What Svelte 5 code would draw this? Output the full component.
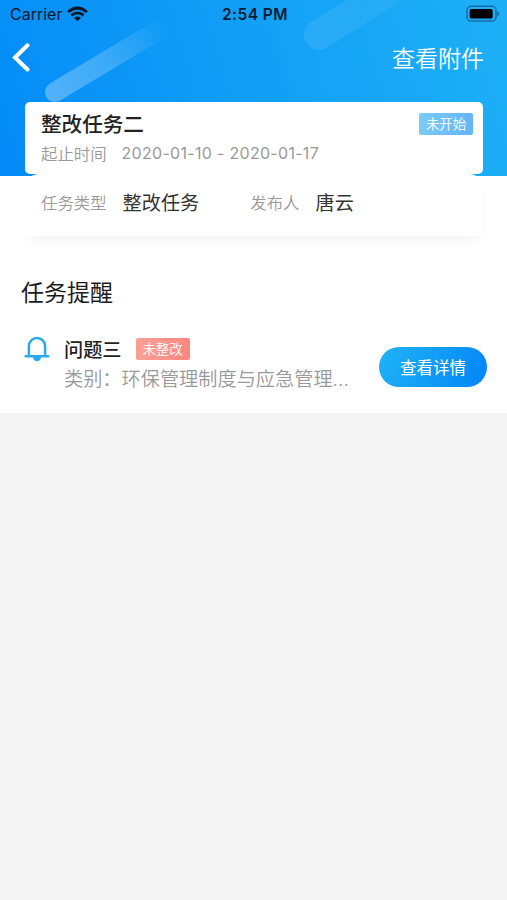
<script>
  const task = {
    title: '整改任务二',
    status: '未开始',
    period: '2020-01-10 - 2020-01-17',
    type: '整改任务',
    publisher: '唐云'
  };
  const reminders = [
    { title: '问题三', status: '未整改', category: '类别：环保管理制度与应急管理...' }
  ];
</script>

<div class="screen">
  <header class="hero">
    <svg class="streaks" width="507" height="176" viewBox="0 0 507 176" aria-hidden="true">
      <defs>
        <linearGradient id="s1" gradientUnits="userSpaceOnUse" x1="50" y1="94" x2="165" y2="26">
          <stop offset="0" stop-color="#fff" stop-opacity=".3" />
          <stop offset=".5" stop-color="#fff" stop-opacity=".2" />
          <stop offset="1" stop-color="#fff" stop-opacity="0" />
        </linearGradient>
        <linearGradient id="s2" gradientUnits="userSpaceOnUse" x1="308" y1="45" x2="410" y2="-20">
          <stop offset="0" stop-color="#fff" stop-opacity=".09" />
          <stop offset="1" stop-color="#fff" stop-opacity=".04" />
        </linearGradient>
      </defs>
      <path d="M55 92 L165 26" stroke="url(#s1)" stroke-width="20" stroke-linecap="round" />
      <path d="M319 35 L410 -23" stroke="url(#s2)" stroke-width="30" stroke-linecap="round" />
    </svg>

    <div class="statusbar">
      <div class="carrier">
        <span>Carrier</span>
        <svg width="21" height="16" viewBox="0 0 21 16">
          <g fill="none" stroke="#061525" stroke-width="2.7">
            <path d="M1.1 6 Q10.5 -2 19.9 6" />
            <path d="M4.4 9.4 Q10.5 4.4 16.6 9.4" />
          </g>
          <path d="M7 11.8 Q10.5 9 14 11.8 L10.5 15.3 Z" fill="#061525" />
        </svg>
      </div>
      <span class="time">2:54 PM</span>
      <svg class="battery" width="34" height="18" viewBox="0 0 34 18">
        <rect x="1" y="1.3" width="29" height="14.8" rx="4.2" fill="none" stroke="#176ca8" stroke-width="1.5" />
        <rect x="3.7" y="4.1" width="23" height="9.5" rx="1.6" fill="#000" />
        <path d="M31.3 6.2 Q33.2 7 33.2 8.7 Q33.2 10.4 31.3 11.2 Z" fill="#176ca8" />
      </svg>
    </div>

    <nav class="navbar">
      <svg width="20" height="30" viewBox="0 0 20 30">
        <path d="M17.5 3.3 L5 15.5 L17.5 27.5" fill="none" stroke="#fff" stroke-width="4" stroke-linecap="round" stroke-linejoin="miter" />
      </svg>
      <span class="attach">查看附件</span>
    </nav>
  </header>

  <section class="card">
    <div class="summary">
      <div class="title-row">
        <h1>{task.title}</h1>
        <span class="tag blue">{task.status}</span>
      </div>
      <div class="period"><span class="label">起止时间</span><span class="dates">{task.period}</span></div>
    </div>
    <div class="details">
      <span class="label">任务类型</span><span class="value type">{task.type}</span>
      <span class="label">发布人</span><span class="value">{task.publisher}</span>
    </div>
  </section>

  <section class="reminders">
    <h2>任务提醒</h2>
    {#each reminders as item}
      <div class="item">
        <svg class="bell" width="26" height="26" viewBox="0 0 26 26">
          <path d="M4.9 19.5 V10.5 C4.9 5.5 8.4 2 13 2 C17.6 2 21.1 5.5 21.1 10.5 V19.5" fill="none" stroke="#2ba9ec" stroke-width="2.5" />
          <path d="M1.7 20.2 H24.3" stroke="#2ba9ec" stroke-width="2.4" stroke-linecap="round" />
          <path d="M8.8 21 H17.2 Q16.2 25.3 13 25.3 Q9.8 25.3 8.8 21 Z" fill="#2ba9ec" />
        </svg>
        <div class="text">
          <div class="heading"><h3>{item.title}</h3><span class="tag red">{item.status}</span></div>
          <p>{item.category}</p>
        </div>
        <button>查看详情</button>
      </div>
    {/each}
  </section>
</div>

<style>
  :global(body) { background: #f4f4f4; }
  .screen {
    width: 507px;
    height: 900px;
    overflow: hidden;
    background: #f4f4f4;
    font-family: Inter, "Noto Sans CJK SC", sans-serif;
    white-space: nowrap;
  }
  h1, h2, h3, p { margin: 0; font-weight: 400; }
  .hero {
    position: relative;
    height: 176px;
    overflow: hidden;
    background: linear-gradient(74deg, #048bf8 0%, #0f9cf6 42%, #1eb0f6 100%);
  }
  .streaks { position: absolute; left: 0; top: 0; }
  .statusbar {
    position: relative;
    display: grid;
    grid-template-columns: 1fr auto 1fr;
    align-items: center;
    height: 28px;
    padding: 0 7px 0 10px;
    color: #061b30;
    font-size: 16px;
  }
  .carrier { display: flex; align-items: center; gap: 5px; letter-spacing: 0; }
  .time { font-weight: 600; font-size: 15.5px; letter-spacing: .45px; }
  .battery { justify-self: end; }
  .navbar {
    position: relative;
    display: flex;
    align-items: center;
    justify-content: space-between;
    height: 58px;
    padding: 0 23px 0 10px;
  }
  .attach { padding-top: 3px; color: #fff; font-size: 23px; line-height: 34px; font-weight: 350; }
  .card {
    position: relative;
    width: 458px;
    height: 134px;
    margin: -74px 0 0 25px;
  }
  .summary {
    position: relative;
    z-index: 1;
    box-sizing: border-box;
    height: 72px;
    padding: 8px 10px 0 16px;
    border-radius: 5px;
    background: #fff;
  }
  .title-row { display: flex; justify-content: space-between; align-items: center; height: 29px; }
  h1 { color: #222; font-size: 20.6px; line-height: 29px; font-weight: 500; }
  .tag {
    display: flex;
    align-items: center;
    justify-content: center;
    width: 54px;
    height: 22px;
    border-radius: 2px;
    color: #fff;
    font-size: 13.4px;
    line-height: 20px;
    font-weight: 350;
  }
  .title-row .tag { margin-top: -2px; }
  .blue { background: linear-gradient(90deg, #7bcaf8, #65b4f8); }
  .red { background: linear-gradient(90deg, #fba095, #fb877f); }
  .period { display: flex; align-items: center; height: 27px; }
  .label { color: #999; font-size: 16.4px; font-weight: 350; }
  .dates { margin-left: 15px; color: #999; font-size: 16px; letter-spacing: .3px; }
  .details {
    position: relative;
    z-index: 2;
    box-sizing: border-box;
    display: flex;
    align-items: center;
    height: 62px;
    padding: 0 16px 6px;
    border-radius: 14px 14px 5px 5px;
    background: #fff;
  }
  .card::before {
    content: "";
    position: absolute;
    left: 6px;
    top: 80px;
    width: 446px;
    height: 54px;
    border-radius: 8px;
    box-shadow: 0 4px 12px 2px rgba(0, 0, 0, .045);
  }
  .value { margin-left: 16px; color: #333; font-size: 19.2px; }
  .type { margin-right: 51px; }
  .reminders { height: 177px; }
  .reminders { background: #fff; padding-top: 61px; margin-top: -61px; }
  h2 { padding: 42px 0 0 21px; color: #1c1c1c; font-size: 23px; line-height: 30px; }
  .item { display: flex; align-items: flex-start; padding: 25px 20px 0 24px; }
  .bell { flex: none; margin-top: 3px; }
  .text { width: 314px; margin-left: 14px; }
  .heading { display: flex; align-items: center; height: 30px; gap: 14px; }
  h3 { padding-top: 2px; color: #222; font-size: 19.2px; font-weight: 500; }
  .heading .tag { margin-top: 2px; }
  p { padding-top: 2px; color: #999; font-size: 19.2px; line-height: 29px; font-weight: 350; }
  button {
    flex: none;
    width: 108px;
    height: 40px;
    margin: 14px 0 0 1px;
    padding: 0;
    border: 0;
    border-radius: 20px;
    background: linear-gradient(115deg, #1eb1f6 5%, #0689f6 90%);
    color: #fff;
    font: 400 16.5px Inter, "Noto Sans CJK SC", sans-serif;
  }
</style>
